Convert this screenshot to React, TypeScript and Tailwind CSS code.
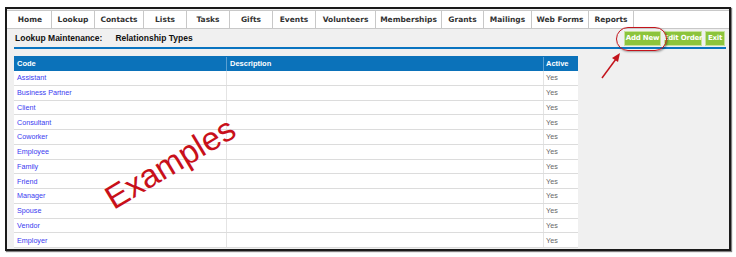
import React from 'react';

const TABS = [
  { label: 'Home', w: 43 },
  { label: 'Lookup', w: 43 },
  { label: 'Contacts', w: 49 },
  { label: 'Lists', w: 43 },
  { label: 'Tasks', w: 43 },
  { label: 'Gifts', w: 43 },
  { label: 'Events', w: 43 },
  { label: 'Volunteers', w: 60 },
  { label: 'Memberships', w: 66 },
  { label: 'Grants', w: 42 },
  { label: 'Mailings', w: 48 },
  { label: 'Web Forms', w: 57 },
  { label: 'Reports', w: 45 },
];

const ROWS = [
  'Assistant',
  'Business Partner',
  'Client',
  'Consultant',
  'Coworker',
  'Employee',
  'Family',
  'Friend',
  'Manager',
  'Spouse',
  'Vendor',
  'Employer',
];

const verdana = { fontFamily: '"DejaVu Sans", Verdana, sans-serif' };
const arial = { fontFamily: '"Liberation Sans", Arial, sans-serif' };

const GreenButton = ({ label, w }: { label: string; w: number }) => (
  <div
    className="flex h-[15px] items-center justify-center whitespace-nowrap border border-[#c6e39a] bg-[#8cc43c] text-[7px] font-bold tracking-[-0.2px] text-white"
    style={{ ...verdana, width: w }}
  >
    {label}
  </div>
);

const App = () => {
  return (
    <div className="relative h-[257px] w-[736px] overflow-hidden bg-white">
      <div className="ml-[5px] mt-[7px] flex h-[244px] w-[726px] flex-col border-2 border-[#1a1a1a] bg-[#f0f0f0] shadow-[1px_1px_1px_rgba(0,0,0,0.5)]">
        {/* tabs */}
        <div className="mt-[1px] flex h-[19px] shrink-0 border-y border-[#c8c8c8] bg-white pl-[2px]" style={verdana}>
          {TABS.map((tab) => (
            <div
              key={tab.label}
              className="flex h-full items-center justify-center border-r border-[#c8c8c8] text-[7.5px] font-bold text-[#333]"
              style={{ width: tab.w }}
            >
              {tab.label}
            </div>
          ))}
        </div>

        {/* title row */}
        <div className="flex h-[18px] shrink-0 items-center pl-[8px] pr-[4px]" style={arial}>
          <div className="flex gap-[13px] text-[8.5px] font-bold text-[#111]">
            <span>Lookup Maintenance:</span>
            <span>Relationship Types</span>
          </div>
          <div className="ml-auto flex gap-[3px]">
            <GreenButton label="Add New" w={37} />
            <GreenButton label="Edit Order" w={38} />
            <GreenButton label="Exit" w={20} />
          </div>
        </div>
        <div className="ml-[7px] mr-[3px] h-[2px] shrink-0 bg-[#0a74c0]" />

        {/* table */}
        <div className="ml-[7px] mt-[7px] w-[564px] shrink-0" style={arial}>
          <div className="flex h-[15px] bg-[#0b72ba] pt-[1px] text-[7.5px] font-bold text-white">
            <div className="flex w-[213px] items-center border-r border-[#5a9fd2] pl-[3px]">Code</div>
            <div className="flex w-[317px] items-center border-r border-[#5a9fd2] pl-[3px]">Description</div>
            <div className="flex flex-1 items-center pl-[2px]">Active</div>
          </div>
          {ROWS.map((row) => (
            <div key={row} className="flex h-[14.75px] border-b border-[#dcdcdc] bg-white text-[7.2px]">
              <div className="flex w-[213px] items-center border-r border-[#e4e4e4] pl-[3px] pt-[2px] text-[#3a3af0]">{row}</div>
              <div className="w-[317px] border-r border-[#e4e4e4]" />
              <div className="flex flex-1 items-center pl-[2px] pt-[2px] text-[#666]">Yes</div>
            </div>
          ))}
        </div>
      </div>

      {/* annotations */}
      <div className="absolute left-[616px] top-[27px] h-[24px] w-[51px] rounded-[12px] border-[1.5px] border-[#c3141c] shadow-[1px_1px_2px_rgba(0,0,0,0.35)]" />
      <svg className="absolute left-0 top-0" width="736" height="257">
        <line x1="602" y1="78" x2="616" y2="59" stroke="#c3141c" strokeWidth="1.5" />
        <polygon points="620,53 612,58 618,62" fill="#c3141c" />
      </svg>
      <div
        className="absolute left-[170px] top-[163px] -translate-x-1/2 -translate-y-1/2 -rotate-[31deg] whitespace-nowrap text-[33px] leading-none text-[#c8101a]"
        style={arial}
      >
        Examples
      </div>
    </div>
  );
};

export default App;
